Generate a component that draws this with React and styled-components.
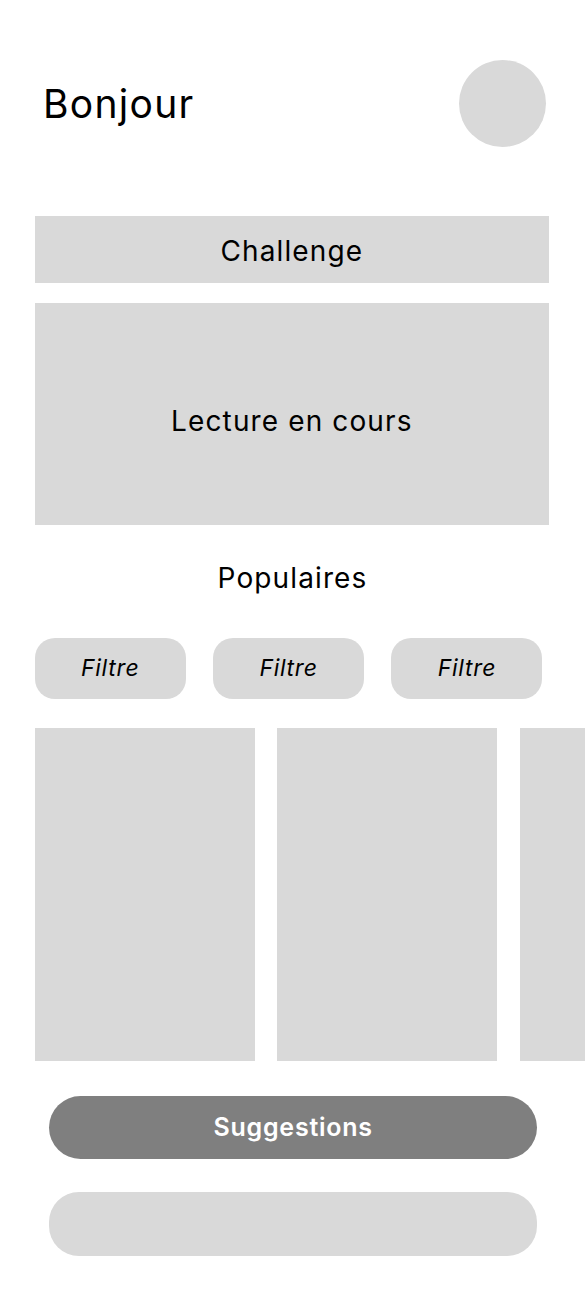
import React from 'react';
import styled, { createGlobalStyle } from 'styled-components';

const GlobalStyle = createGlobalStyle`
  html, body {
    margin: 0;
    padding: 0;
    background: #ffffff;
    overflow-x: hidden;
  }
  body {
    font-family: Inter, "Noto Sans", sans-serif;
    color: #000000;
  }
`;

const filters = ['Filtre', 'Filtre', 'Filtre'];
const books = [1, 2, 3];

const App = () => {
    return (
        <>
            <GlobalStyle />
            <Page>
                <Header>
                    <Greeting>Bonjour</Greeting>
                    <Avatar />
                </Header>

                <Main>
                    <Banner $height={67} $offset={2}>Challenge</Banner>
                    <Banner $height={222} $offset={14}>Lecture en cours</Banner>
                </Main>

                <SectionTitle>Populaires</SectionTitle>

                <FilterRow>
                    {filters.map((label, index) => (
                        <FilterChip key={index}>{label}</FilterChip>
                    ))}
                </FilterRow>

                <Shelf>
                    {books.map((book) => (
                        <BookCard key={book} />
                    ))}
                </Shelf>

                <Actions>
                    <PillButton $dark>Suggestions</PillButton>
                    <PillButton />
                </Actions>
            </Page>
        </>
    );
};

export default App;

const Page = styled.div`
  width: 585px;
  min-height: 1308px;
  padding-top: 60px;
  box-sizing: border-box;
  overflow: hidden;
`;

const Header = styled.header`
  display: flex;
  align-items: center;
  justify-content: space-between;
  padding: 0 39px 0 43px;
`;

const Greeting = styled.h1`
  margin: 0;
  font-size: 39px;
  font-weight: 400;
  letter-spacing: 0.033em;
  line-height: 1;
`;

const Avatar = styled.div`
  width: 87px;
  height: 87px;
  border-radius: 50%;
  background: #d9d9d9;
`;

const Main = styled.section`
  display: flex;
  flex-direction: column;
  gap: 20px;
  margin-top: 69px;
  padding: 0 36px 0 34.7px;
`;

const Banner = styled.div`
  height: ${(p) => p.$height}px;
  padding-top: ${(p) => p.$offset}px;
  box-sizing: border-box;
  display: flex;
  align-items: center;
  justify-content: center;
  background: #d9d9d9;
  font-size: 28px;
  font-weight: 400;
  letter-spacing: 0.04em;
  line-height: 1;
`;

const SectionTitle = styled.h2`
  margin: 38.8px 0 45.8px;
  text-align: center;
  font-size: 28px;
  font-weight: 400;
  letter-spacing: 0.04em;
  line-height: 1;
`;

const FilterRow = styled.div`
  display: flex;
  gap: 27.4px;
  padding-left: 34.7px;
`;

const FilterChip = styled.button`
  width: 151px;
  height: 61px;
  border: none;
  border-radius: 20px;
  background: #d9d9d9;
  font-family: Inter, "Noto Sans", sans-serif;
  font-size: 23px;
  font-style: italic;
  font-weight: 400;
  letter-spacing: 0.03em;
  line-height: 1;
  color: #000000;
  cursor: pointer;
`;

const Shelf = styled.div`
  display: flex;
  gap: 22.6px;
  margin-top: 29px;
  padding-left: 34.7px;
`;

const BookCard = styled.div`
  flex: 0 0 220px;
  height: 333px;
  background: #d9d9d9;
`;

const Actions = styled.div`
  display: flex;
  flex-direction: column;
  gap: 33px;
  margin-top: 35px;
  padding: 0 48px 0 49.3px;
`;

const PillButton = styled.button`
  height: ${(p) => (p.$dark ? 63 : 64)}px;
  border: none;
  border-radius: ${(p) => (p.$dark ? 32 : 30)}px;
  background: ${(p) => (p.$dark ? '#7f7f7f' : '#d9d9d9')};
  color: #ffffff;
  font-family: Inter, "Noto Sans", sans-serif;
  font-size: 25px;
  font-weight: 600;
  letter-spacing: 0.03em;
  line-height: 1;
  cursor: pointer;
`;
